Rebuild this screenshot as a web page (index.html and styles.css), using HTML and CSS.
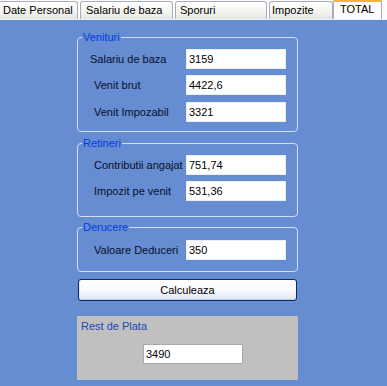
FILE: index.html
```html
<!DOCTYPE html>
<html>
<head>
<meta charset="utf-8">
<link rel="stylesheet" href="styles.css">
</head>
<body>
<div class="tabs">
  <div class="tab t1">Date Personal</div>
  <div class="tab t2">Salariu de baza</div>
  <div class="tab t3">Sporuri</div>
  <div class="tab t4">Impozite</div>
  <div class="tab sel">TOTAL</div>
</div>
<div class="page">
  <fieldset class="grp g1">
    <legend>Venituri</legend>
    <div class="row"><span class="lbl first">Salariu de baza</span><span class="field">3159</span></div>
    <div class="row"><span class="lbl">Venit brut</span><span class="field">4422,6</span></div>
    <div class="row r3"><span class="lbl">Venit Impozabil</span><span class="field">3321</span></div>
  </fieldset>
  <fieldset class="grp g2">
    <legend>Retineri</legend>
    <div class="row"><span class="lbl">Contributii angajat</span><span class="field">751,74</span></div>
    <div class="row"><span class="lbl">Impozit pe venit</span><span class="field">531,36</span></div>
  </fieldset>
  <fieldset class="grp g3">
    <legend>Derucere</legend>
    <div class="row"><span class="lbl">Valoare Deduceri</span><span class="field">350</span></div>
  </fieldset>
  <button class="btn">Calculeaza</button>
  <div class="rest">
    <div class="rest-title">Rest de Plata</div>
    <span class="field rest-field">3490</span>
  </div>
</div>
</body>
</html>
```

FILE: styles.css
```css
html, body {
  margin: 0;
  padding: 0;
  background: #668cd2;
}
body {
  width: 387px;
  height: 386px;
  overflow: hidden;
  font-family: "Liberation Sans", Arial, sans-serif;
  font-size: 11px;
  color: #000;
}
.tabs {
  height: 20px;
  display: flex;
  align-items: flex-end;
  background: #fcfcfe;
  border-bottom: 1px solid #eef2fa;
  box-sizing: border-box;
}
.tab {
  box-sizing: border-box;
  height: 18px;
  line-height: 17px;
  border: 1px solid #a8aeb8;
  border-bottom: none;
  border-radius: 3px 3px 0 0;
  background: linear-gradient(#ffffff, #f3f3ef 60%, #e6e6e0);
  white-space: nowrap;
  margin-right: 2px;
}
.t1 { width: 78px; padding-left: 3px; border-left: none; border-radius: 0 3px 0 0; }
.t2 { width: 93px; padding-left: 5px; }
.t3 { width: 92px; padding-left: 4px; }
.t4 { width: 64px; padding-left: 2px; margin-right: 0; }
.sel {
  width: 49px;
  height: 20px;
  padding-left: 6px;
  line-height: 14px;
  background: #fcfcfe;
  border-top: 3px solid #f4b43a;
  border-color: #f4b43a #a8aeb8 transparent #a8aeb8;
  margin-right: 0;
}
.page {
  padding: 11px 0 0 77px;
}
.grp {
  box-sizing: border-box;
  width: 221px;
  margin: 0;
  padding: 5px 11px 9px 0;
  border: 1px solid #d3ddf2;
  border-radius: 4px;
  min-width: 0;
  display: flex;
  flex-direction: column;
  gap: 6px;
}
.grp legend {
  font-size: 11px;
  line-height: 13px;
  color: #0040e0;
  padding: 0 1px;
  margin-left: 4px;
}
.g2 { margin-top: 5px; padding-bottom: 15px; }
.g3 { margin-top: 4px; padding-top: 6px; padding-bottom: 11px; }
.r3 { margin-top: 1px; }
.row {
  display: grid;
  grid-template-columns: 108px 100px;
  align-items: center;
  height: 20px;
}
.lbl {
  padding-left: 16px;
  white-space: nowrap;
  color: #08102a;
}
.lbl.first { padding-left: 12px; }
.field {
  box-sizing: border-box;
  display: block;
  height: 20px;
  line-height: 18px;
  padding-left: 2px;
  background: #fff;
  border: 1px solid #e9eef8;
}
.btn {
  display: block;
  box-sizing: border-box;
  width: 219px;
  height: 22px;
  margin: 7px 0 0 1px;
  padding: 0;
  font-family: "Liberation Sans", Arial, sans-serif;
  font-size: 11px;
  color: #000;
  border: 1px solid #0a2a66;
  border-radius: 3px;
  background: linear-gradient(#ffffff, #f7f8fc 55%, #e0e5f4);
  box-shadow: inset 0 -1px 0 #c4cdea, inset 1px 0 0 #dfe6f8;
}
.rest {
  box-sizing: border-box;
  width: 221px;
  height: 64px;
  margin-top: 15px;
  background: #c0c0c0;
  padding: 4px 0 0 4px;
}
.rest-title {
  line-height: 13px;
  color: #1c44bc;
}
.rest-field {
  width: 100px;
  margin: 11px 0 0 62px;
  border-color: #a9a9a9;
}
```
